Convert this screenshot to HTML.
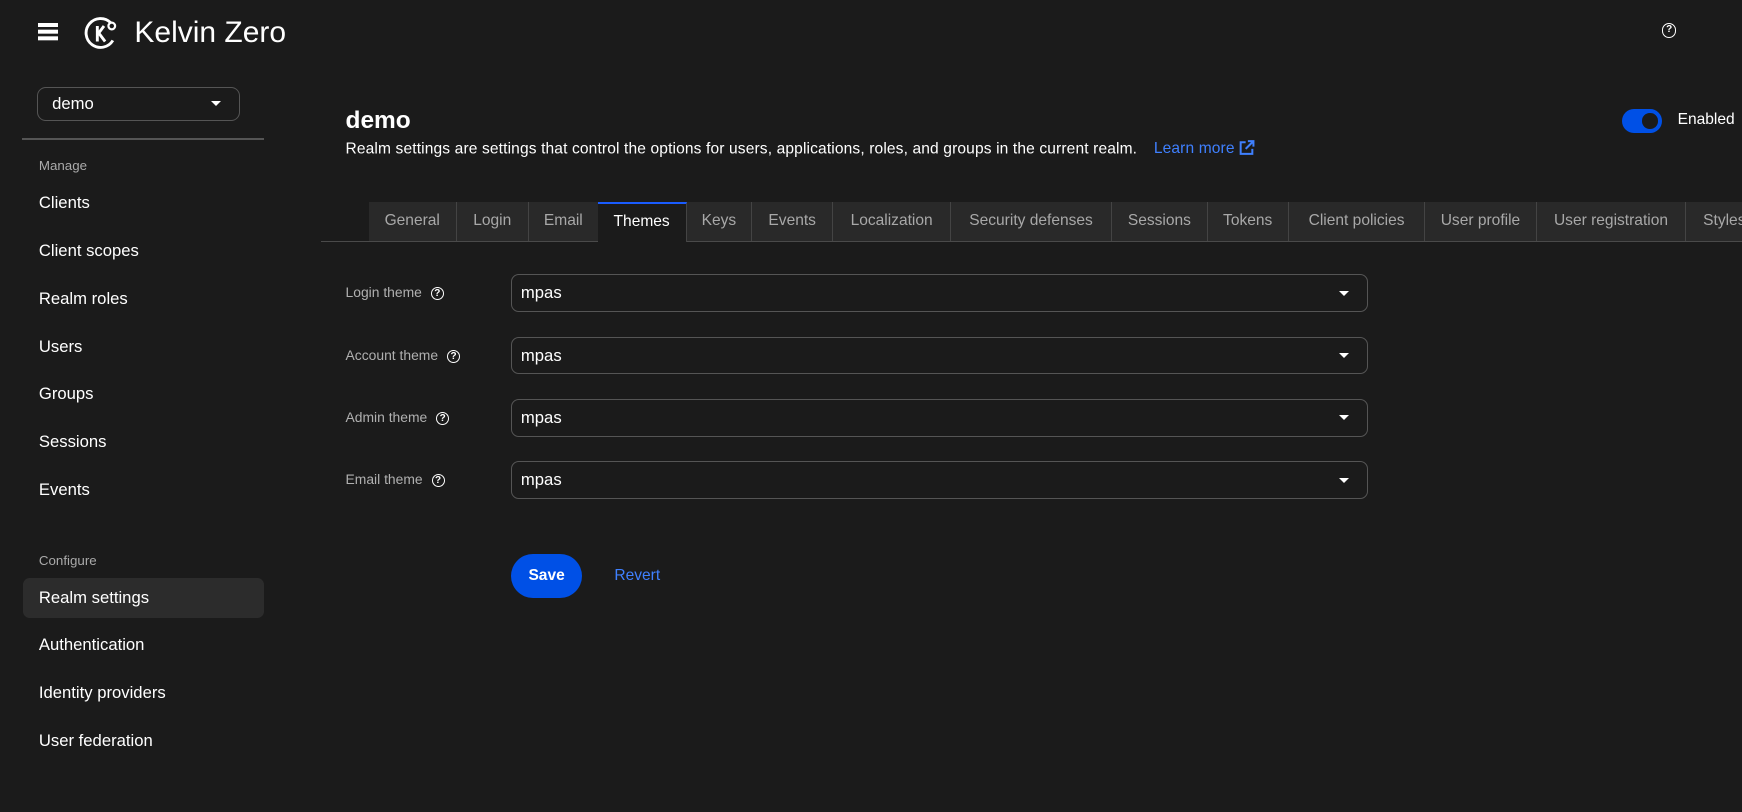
<!DOCTYPE html>
<html><head><meta charset="utf-8"><style>
html,body{margin:0;padding:0;background:#1b1b1b;overflow:hidden}
body{width:1568px;height:731px;zoom:1.111;position:relative;font-family:"Liberation Sans",sans-serif;color:#fff}
.a{position:absolute;white-space:nowrap}
.nav{font-size:15px;left:35px}
.sec{font-size:12px;color:#aaa;left:35px}
.tabs{position:absolute;left:289px;top:182px;right:0;height:35px;border-bottom:1px solid #4a4a4a}
.tab{position:absolute;top:0;height:35px;background:#292929;border-right:1px solid #444;color:#a8a8a8;font-size:14px;line-height:35px;text-align:center;box-sizing:border-box}
.tab.on{background:#1b1b1b;color:#fff;border-top:2px solid #1a5cff;line-height:32px;height:36px}
.lbl{font-size:12.5px;color:#b0b0b0;left:311px}
.inp{position:absolute;left:460px;width:771px;height:34px;border:1px solid #555;border-radius:7px;box-sizing:border-box;font-size:15px;line-height:32px;padding-left:8px}
.car{position:absolute;right:16px;top:14px;width:0;height:0;border-left:5px solid transparent;border-right:5px solid transparent;border-top:5px solid #fff}
.q{display:inline-block;width:10px;height:10px;border:1.6px solid #fff;border-radius:50%;font-size:9px;line-height:10px;text-align:center;font-weight:bold;color:#fff;margin-left:8px;vertical-align:1px}
</style></head><body>
<div class="a" style="left:34px;top:21px;width:18px;height:3px;background:#fff;box-shadow:0 6px 0 #fff,0 12px 0 #fff"></div>
<svg class="a" style="left:76px;top:14px" width="34" height="32" viewBox="0 0 34 32"><path d="M24 6 A13 13 0 1 0 26 22" fill="none" stroke="#fff" stroke-width="2.6"/><path d="M12 9v14M12 17l6-8M13 15l6 8" stroke="#fff" stroke-width="2.6" fill="none"/><circle cx="25" cy="9" r="3" fill="none" stroke="#fff" stroke-width="2"/></svg>
<div class="a" style="left:121px;top:14px;font-size:27px">Kelvin Zero</div>
<div class="a" style="left:1496px;top:21px;width:11px;height:11px;border:1.6px solid #fff;border-radius:50%;font-size:9px;line-height:11px;text-align:center;font-weight:bold">?</div>

<div class="a" style="left:33px;top:78px;width:183px;height:31px;border:1px solid #555;border-radius:8px;box-sizing:border-box;font-size:15px;line-height:29px;padding-left:13px">demo<div class="car" style="top:12px;right:16px"></div></div>
<div class="a" style="left:20px;top:124px;width:218px;height:2px;background:#555"></div>
<div class="a sec" style="top:142px">Manage</div>
<div class="a nav" style="top:174px">Clients</div>
<div class="a nav" style="top:217px">Client scopes</div>
<div class="a nav" style="top:260px">Realm roles</div>
<div class="a nav" style="top:303px">Users</div>
<div class="a nav" style="top:346px">Groups</div>
<div class="a nav" style="top:389px">Sessions</div>
<div class="a nav" style="top:432px">Events</div>
<div class="a sec" style="top:498px">Configure</div>
<div class="a" style="left:21px;top:520px;width:217px;height:36px;background:#2c2c2c;border-radius:6px"></div>
<div class="a nav" style="top:529px">Realm settings</div>
<div class="a nav" style="top:572px">Authentication</div>
<div class="a nav" style="top:615px">Identity providers</div>
<div class="a nav" style="top:658px">User federation</div>

<div class="a" style="left:311px;top:96px;font-size:22px;font-weight:bold">demo</div>
<div class="a" style="left:311px;top:126px;font-size:14px;letter-spacing:0.12px">Realm settings are settings that control the options for users, applications, roles, and groups in the current realm. <span style="color:#3f80ff;margin-left:11px">Learn more <svg width="14" height="14" viewBox="0 0 14 14" style="vertical-align:-2px"><path d="M6 2H1.5v10.5H12V8M8 1h5v5M13 1L6 8" fill="none" stroke="#3f80ff" stroke-width="1.8"/></svg></span></div>
<div class="a" style="left:1460px;top:98px;width:36px;height:22px;border-radius:11px;background:#0050e6"><div style="position:absolute;right:4px;top:4px;width:14px;height:14px;border-radius:50%;background:#1b1b1b"></div></div>
<div class="a" style="left:1510px;top:100px;font-size:14px">Enabled</div>

<div class="tabs">
<div class="tab" style="left:43px;width:79px">General</div>
<div class="tab" style="left:122px;width:65px">Login</div>
<div class="tab" style="left:187px;width:63px">Email</div>
<div class="tab on" style="left:249px;width:80px">Themes</div>
<div class="tab" style="left:329px;width:59px">Keys</div>
<div class="tab" style="left:388px;width:73px">Events</div>
<div class="tab" style="left:461px;width:106px">Localization</div>
<div class="tab" style="left:567px;width:145px">Security defenses</div>
<div class="tab" style="left:712px;width:86px">Sessions</div>
<div class="tab" style="left:798px;width:73px">Tokens</div>
<div class="tab" style="left:871px;width:123px">Client policies</div>
<div class="tab" style="left:994px;width:100px">User profile</div>
<div class="tab" style="left:1094px;width:135px">User registration</div>
<div class="tab" style="left:1229px;width:60px;text-align:left;padding-left:15px">Styles</div>
</div>

<div class="a lbl" style="top:256px">Login theme<span class="q">?</span></div>
<div class="inp" style="top:247px">mpas<div class="car"></div></div>
<div class="a lbl" style="top:312px">Account theme<span class="q">?</span></div>
<div class="inp" style="top:303px">mpas<div class="car"></div></div>
<div class="a lbl" style="top:368px">Admin theme<span class="q">?</span></div>
<div class="inp" style="top:359px">mpas<div class="car"></div></div>
<div class="a lbl" style="top:424px">Email theme<span class="q">?</span></div>
<div class="inp" style="top:415px">mpas<div class="car"></div></div>

<div class="a" style="left:460px;top:499px;width:64px;height:39px;border-radius:20px;background:#0050e6;font-size:14px;font-weight:bold;line-height:39px;text-align:center">Save</div>
<div class="a" style="left:553px;top:510px;font-size:14px;color:#3f80ff">Revert</div>
</body></html>
